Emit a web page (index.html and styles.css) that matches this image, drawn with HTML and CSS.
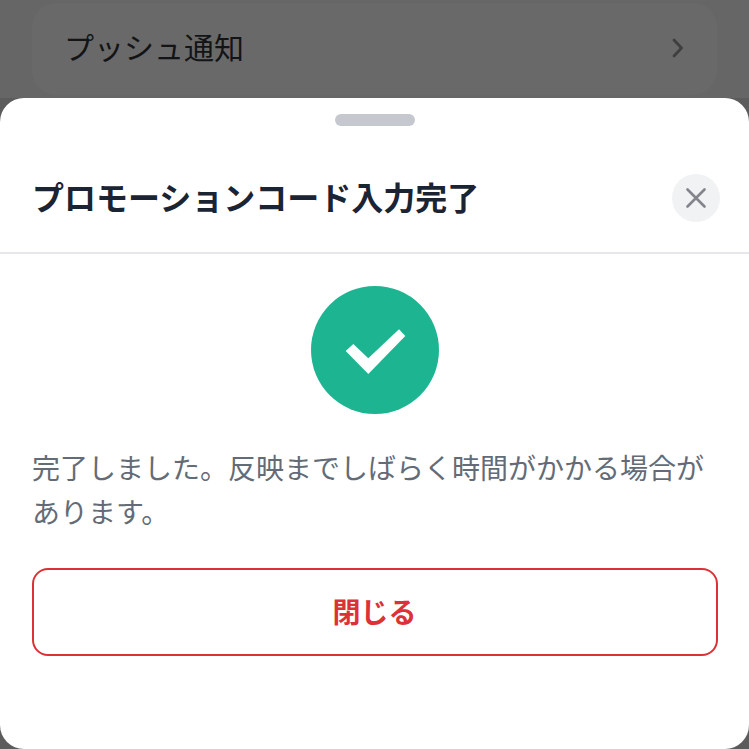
FILE: index.html
```html
<!DOCTYPE html>
<html lang="ja">
<head>
<meta charset="utf-8">
<title>プロモーションコード入力完了</title>
<link rel="stylesheet" href="styles.css">
</head>
<body>
<div class="backdrop">
  <div class="row">
    <span class="row-label">プッシュ通知</span>
    <svg class="chevron" width="14" height="20" viewBox="0 0 14 20"><path d="M3 2 L10.5 10 L3 18" fill="none" stroke="#3f3f40" stroke-width="2.8" stroke-linecap="round" stroke-linejoin="round"/></svg>
  </div>
</div>
<section class="sheet">
  <div class="handle-wrap"><div class="handle"></div></div>
  <header class="sheet-head">
    <h1 class="title">プロモーションコード入力完了</h1>
    <button class="close" aria-label="閉じる">
      <svg width="20" height="20" viewBox="0 0 20 20"><path d="M1.5 1.5 L18.5 18.5 M18.5 1.5 L1.5 18.5" fill="none" stroke="#82868c" stroke-width="2.6" stroke-linecap="round"/></svg>
    </button>
  </header>
  <div class="body">
    <svg class="check" width="128" height="128" viewBox="0 0 128 128"><circle cx="64" cy="64" r="64" fill="#1db591"/><polygon points="34.7,65 42.3,58 57.3,72.3 88,43.3 94.3,50 57.3,88" fill="#fff"/></svg>
    <p class="message">完了しました。反映までしばらく時間がかかる場合があります。</p>
    <button class="action">閉じる</button>
  </div>
</section>
</body>
</html>
```

FILE: styles.css
```css
* { box-sizing: border-box; }
html, body { margin: 0; padding: 0; }
body {
  width: 749px;
  height: 749px;
  overflow: hidden;
  background: #5c5c5c;
  font-family: "Noto Sans CJK JP", "Noto Sans", sans-serif;
}
.backdrop {
  height: 98px;
  background: #666667;
  padding: 3px 32px 0;
  overflow: hidden;
}
.row {
  height: 92px;
  background: #696969;
  border-radius: 24px;
  padding: 0 32px 2px 32px;
  display: flex;
  align-items: center;
  justify-content: space-between;
}
.row-label {
  font-size: 30px;
  line-height: 40px;
  color: #131416;
  margin-bottom: 4px;
}
.sheet {
  height: 651px;
  background: #fff;
  border-radius: 24px;
  display: flex;
  flex-direction: column;
}
.handle-wrap {
  display: flex;
  justify-content: center;
  padding-top: 16px;
}
.handle {
  width: 80px;
  height: 12px;
  border-radius: 6px;
  background: #c5c9cf;
}
.sheet-head {
  height: 128px;
  padding: 18px 29px 0 32px;
  border-bottom: 2px solid #e5e7ea;
  display: flex;
  align-items: center;
  justify-content: space-between;
}
.title {
  margin: 0 0 4px;
  font-size: 32px;
  line-height: 40px;
  font-weight: 700;
  color: #1a2433;
}
.close {
  width: 48px;
  height: 48px;
  border: 0;
  padding: 0;
  border-radius: 50%;
  background: #f1f2f4;
  display: flex;
  align-items: center;
  justify-content: center;
}
.body {
  padding: 32px 32px 0;
  display: flex;
  flex-direction: column;
  align-items: center;
}
.check { display: block; flex: none; }
.message {
  margin: 31px 0 0;
  width: 100%;
  font-size: 28px;
  line-height: 44px;
  color: #636b76;
}
.action {
  margin-top: 35px;
  width: 686px;
  height: 88px;
  padding: 0 0 2px;
  background: #fff;
  border: 2px solid #dc3237;
  border-radius: 16px;
  color: #dc3237;
  font-family: inherit;
  font-size: 28px;
  font-weight: 700;
}
```
